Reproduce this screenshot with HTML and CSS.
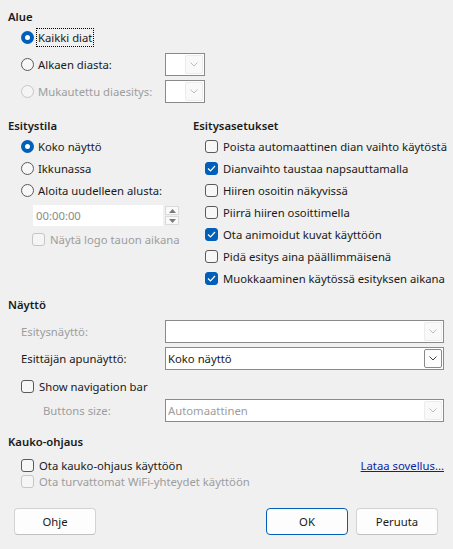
FILE: index.html
```html
<!DOCTYPE html>
<html lang="fi">
<head>
  <meta charset="UTF-8">
  <title>Diaesitysasetukset</title>
  <link rel="stylesheet" href="styles.css">
</head>
<body>
<div class="dialog">

  <section class="group">
    <h2 class="group-title">Alue</h2>
    <div class="row row-combo">
      <label class="opt"><span class="radio checked"></span><span class="focus">Kaikki diat</span></label>
    </div>
    <div class="row row-combo">
      <label class="opt opt-fixed"><span class="radio"></span>Alkaen diasta:</label>
      <span class="combo combo-small"><span class="combo-btn"><svg width="8" height="5" viewBox="0 0 8 5"><polyline points="0.5,0.5 4,4 7.5,0.5"/></svg></span></span>
    </div>
    <div class="row row-combo">
      <label class="opt opt-fixed disabled"><span class="radio"></span>Mukautettu diaesitys:</label>
      <span class="combo combo-small"><span class="combo-btn"><svg width="8" height="5" viewBox="0 0 8 5"><polyline points="0.5,0.5 4,4 7.5,0.5"/></svg></span></span>
    </div>
  </section>

  <div class="columns">
    <section class="group">
      <h2 class="group-title">Esitystila</h2>
      <div class="row"><label class="opt"><span class="radio checked"></span>Koko näyttö</label></div>
      <div class="row"><label class="opt"><span class="radio"></span>Ikkunassa</label></div>
      <div class="row"><label class="opt"><span class="radio"></span>Aloita uudelleen alusta:</label></div>
      <div class="time-row">
        <span class="time-field">00:00:00</span>
        <span class="spin">
          <span class="spin-btn"><svg width="7" height="4" viewBox="0 0 7 4"><polygon points="0,4 3.5,0 7,4"/></svg></span>
          <span class="spin-btn"><svg width="7" height="4" viewBox="0 0 7 4"><polygon points="0,0 7,0 3.5,4"/></svg></span>
        </span>
      </div>
      <div class="row row-logo"><label class="opt disabled"><span class="check"></span>Näytä logo tauon aikana</label></div>
    </section>

    <section class="group">
      <h2 class="group-title">Esitysasetukset</h2>
      <div class="row"><label class="opt"><span class="check"></span>Poista automaattinen dian vaihto käytöstä</label></div>
      <div class="row"><label class="opt"><span class="check checked"><svg width="9" height="7" viewBox="0 0 9 7"><polyline points="1,3.5 3.5,6 8,1"/></svg></span>Dianvaihto taustaa napsauttamalla</label></div>
      <div class="row"><label class="opt"><span class="check"></span>Hiiren osoitin näkyvissä</label></div>
      <div class="row"><label class="opt"><span class="check"></span>Piirrä hiiren osoittimella</label></div>
      <div class="row"><label class="opt"><span class="check checked"><svg width="9" height="7" viewBox="0 0 9 7"><polyline points="1,3.5 3.5,6 8,1"/></svg></span>Ota animoidut kuvat käyttöön</label></div>
      <div class="row"><label class="opt"><span class="check"></span>Pidä esitys aina päällimmäisenä</label></div>
      <div class="row"><label class="opt"><span class="check checked"><svg width="9" height="7" viewBox="0 0 9 7"><polyline points="1,3.5 3.5,6 8,1"/></svg></span>Muokkaaminen käytössä esityksen aikana</label></div>
    </section>
  </div>

  <section class="group group-display">
    <h2 class="group-title">Näyttö</h2>
    <div class="row row-combo">
      <span class="field-label disabled">Esitysnäyttö:</span>
      <span class="combo combo-wide"><span class="combo-text"></span><span class="combo-btn"><svg width="8" height="5" viewBox="0 0 8 5"><polyline points="0.5,0.5 4,4 7.5,0.5"/></svg></span></span>
    </div>
    <div class="row row-combo">
      <span class="field-label">Esittäjän apunäyttö:</span>
      <span class="combo combo-wide active"><span class="combo-text">Koko näyttö</span><span class="combo-btn"><svg width="8" height="5" viewBox="0 0 8 5"><polyline points="0.5,0.5 4,4 7.5,0.5"/></svg></span></span>
    </div>
    <div class="row row-nav">
      <label class="opt"><span class="check"></span>Show navigation bar</label>
    </div>
    <div class="row row-combo">
      <span class="field-label field-label-indent disabled">Buttons size:</span>
      <span class="combo combo-wide"><span class="combo-text disabled">Automaattinen</span><span class="combo-btn"><svg width="8" height="5" viewBox="0 0 8 5"><polyline points="0.5,0.5 4,4 7.5,0.5"/></svg></span></span>
    </div>
  </section>

  <section class="group group-remote">
    <h2 class="group-title">Kauko-ohjaus</h2>
    <div class="row row-tight">
      <label class="opt"><span class="check"></span>Ota kauko-ohjaus käyttöön</label>
      <a class="link" href="#">Lataa sovellus...</a>
    </div>
    <div class="row row-tight">
      <label class="opt disabled"><span class="check"></span>Ota turvattomat WiFi-yhteydet käyttöön</label>
    </div>
  </section>

  <div class="buttons">
    <button type="button" class="btn">Ohje</button>
    <span class="spacer"></span>
    <button type="button" class="btn btn-default">OK</button>
    <button type="button" class="btn">Peruuta</button>
  </div>

</div>
</body>
</html>
```

FILE: styles.css
```css
body {
  margin: 0;
  background-color: #f0f0f0;
  color: #1a1a1a;
  font-family: "Noto Sans", "Liberation Sans", sans-serif;
  font-size: 11.3px;
}

.dialog {
  width: 453px;
  height: 549px;
  box-sizing: border-box;
  padding: 9px 9px 0 8px;
  display: flex;
  flex-direction: column;
}

.group-title {
  margin: 0;
  font-size: 11.3px;
  font-weight: 600;
  line-height: 16px;
  height: 16px;
}

.row {
  display: flex;
  align-items: center;
  height: 22px;
}

.group > .group-title + .row {
  margin-top: 1px;
}

.row-combo {
  height: 23px;
  margin-top: 4px;
}

.group > .group-title + .row-combo {
  margin-top: 1px;
}

.opt {
  display: flex;
  align-items: center;
  padding-left: 13px;
  white-space: nowrap;
}

.opt-fixed {
  width: 144px;
  flex-shrink: 0;
}

.disabled {
  color: #9d9d9d;
}

.focus {
  outline: 1px dotted #000;
  outline-offset: 1px;
}

/* radio buttons */
.radio {
  width: 11px;
  height: 11px;
  border: 1px solid #5a5a5a;
  border-radius: 50%;
  background-color: #f7f7f7;
  margin-right: 4px;
  flex-shrink: 0;
  position: relative;
}

.radio.checked {
  width: 13px;
  height: 13px;
  border: none;
  background-color: #005fb8;
}

.radio.checked::after {
  content: "";
  position: absolute;
  left: 4px;
  top: 4px;
  width: 5px;
  height: 5px;
  border-radius: 50%;
  background-color: #fff;
}

.disabled .radio,
.disabled .check {
  border-color: #c6c6c6;
  background-color: #f5f5f5;
}

/* check boxes */
.check {
  width: 11px;
  height: 11px;
  border: 1px solid #5a5a5a;
  border-radius: 3px;
  background-color: #f7f7f7;
  margin-right: 5px;
  flex-shrink: 0;
  display: flex;
  align-items: center;
  justify-content: center;
}

.check.checked {
  border-color: #005fb8;
  background-color: #005fb8;
}

.check svg polyline {
  fill: none;
  stroke: #fff;
  stroke-width: 1.2;
}

/* combo boxes */
.combo {
  display: flex;
  align-items: stretch;
  height: 23px;
  box-sizing: border-box;
  border: 1px solid #8a8a8a;
  background-color: #fff;
  padding: 1px;
}

.combo-small {
  width: 40px;
}

.combo-wide {
  flex: 1;
}

.combo-text {
  flex: 1;
  padding-left: 1px;
  display: flex;
  align-items: center;
}

.combo-btn {
  width: 16px;
  margin-left: auto;
  display: flex;
  align-items: center;
  justify-content: center;
  background-color: #f9f9f9;
  border: 1px solid #ececec;
  border-radius: 2px;
}

.combo-btn svg polyline {
  fill: none;
  stroke: #bdbdbd;
  stroke-width: 1;
}

.combo.active .combo-btn {
  background-color: #fdfdfd;
  border-color: #8a8a8a;
}

.combo.active .combo-btn svg polyline {
  stroke: #404040;
}

/* two columns */
.columns {
  display: grid;
  grid-template-columns: 185px 1fr;
  margin-top: 15px;
}

.columns .group:last-child .opt {
  padding-left: 12px;
}

.time-row {
  display: flex;
  align-items: center;
  margin: 4px 0 0 25px;
  height: 21px;
}

.time-field {
  width: 130px;
  height: 21px;
  box-sizing: border-box;
  background-color: #fff;
  color: #8a8a8a;
  padding-left: 3px;
  display: flex;
  align-items: center;
}

.spin {
  display: flex;
  flex-direction: column;
  margin-left: 2px;
  gap: 1px;
}

.spin-btn {
  width: 14px;
  height: 9px;
  box-sizing: border-box;
  border: 1px solid #dadada;
  background-color: #f9f9f9;
  display: flex;
  align-items: center;
  justify-content: center;
}

.spin-btn svg polygon {
  fill: #7a7a7a;
}

.row-logo {
  margin-top: 2px;
}

.row-logo .opt {
  padding-left: 24px;
}

/* display group */
.group-display {
  margin-top: 8px;
}

.group-display > .group-title + .row-combo {
  margin-top: 7px;
}

.field-label {
  width: 144px;
  padding-left: 13px;
  flex-shrink: 0;
}

.field-label-indent {
  padding-left: 35px;
  width: 122px;
}

.row-nav {
  margin-top: 5px;
}

.row-nav + .row-combo {
  margin-top: 2px;
}

/* remote group */
.group-remote {
  margin-top: 12px;
}

.row-tight {
  height: 16px;
}

.group-remote .group-title + .row-tight {
  margin-top: 7px;
}

.link {
  margin-left: auto;
  color: #0a1fa8;
  text-decoration: underline;
}

/* bottom buttons */
.buttons {
  display: flex;
  gap: 8px;
  margin-top: auto;
  margin-bottom: 14px;
  padding: 0 6px 0 6px;
}

.spacer {
  flex: 1;
}

.btn {
  width: 82px;
  height: 27px;
  font-family: inherit;
  font-size: 11.3px;
  color: #1a1a1a;
  background-color: #fdfdfd;
  border: 1px solid #d3d3d3;
  border-bottom-color: #c0c0c0;
  border-radius: 4px;
}

.btn-default {
  border-color: #005fb8;
}
```
